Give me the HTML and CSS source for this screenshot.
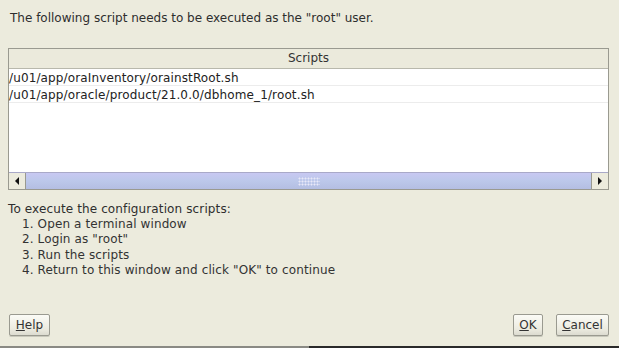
FILE: index.html
```html
<!DOCTYPE html>
<html>
<head>
<meta charset="utf-8">
<link rel="stylesheet" href="styles.css">
</head>
<body>
<div class="dialog">
  <p class="intro">The following script needs to be executed as the "root" user.</p>
  <div class="table">
    <div class="thead">Scripts</div>
    <div class="tbody">
      <div class="row">/u01/app/oraInventory/orainstRoot.sh</div>
      <div class="row">/u01/app/oracle/product/21.0.0/dbhome_1/root.sh</div>
    </div>
    <div class="hscroll">
      <div class="arrow"><svg width="6" height="8" viewBox="0 0 6 8"><path d="M5 0 L1 4 L5 8 Z" fill="#111"/></svg></div>
      <div class="track"><div class="grip"></div></div>
      <div class="arrow"><svg width="6" height="8" viewBox="0 0 6 8"><path d="M1 0 L5 4 L1 8 Z" fill="#111"/></svg></div>
    </div>
  </div>
  <div class="instructions">
    <p class="lead">To execute the configuration scripts:</p>
    <ol class="steps">
      <li>1. Open a terminal window</li>
      <li>2. Login as "root"</li>
      <li>3. Run the scripts</li>
      <li>4. Return to this window and click "OK" to continue</li>
    </ol>
  </div>
  <div class="buttons">
    <button class="btn help"><u>H</u>elp</button>
    <div class="right">
      <button class="btn ok"><u>O</u>K</button>
      <button class="btn cancel"><u>C</u>ancel</button>
    </div>
  </div>
</div>
<div class="bottombar"></div>
</body>
</html>
```
FILE: styles.css
```css
html, body {
  margin: 0;
  padding: 0;
  background: #ecebdd;
  width: 619px;
  height: 348px;
  overflow: hidden;
}
body {
  font-family: "DejaVu Sans", sans-serif;
  font-size: 12px;
  color: #2e2e2e;
  position: relative;
}
.dialog {
  display: flex;
  flex-direction: column;
  height: 346px;
  padding: 0 10px 0 8px;
  box-sizing: border-box;
}
.intro {
  margin: 11px 0 0 2px;
  line-height: 14px;
}
.table {
  margin-top: 23px;
  width: 601px;
  border: 1px solid #9a9a90;
  box-sizing: border-box;
  display: flex;
  flex-direction: column;
  height: 142px;
}
.thead {
  height: 19px;
  line-height: 19px;
  text-align: center;
  background: #ebeadc;
  border-bottom: 1px solid #b8b8ac;
  color: #333;
}
.tbody {
  flex: 1;
  background: #fff;
}
.row {
  height: 16px;
  line-height: 18px;
  border-bottom: 1px solid #ececec;
  color: #222;
  letter-spacing: 0.13px;
}
.hscroll {
  display: flex;
  height: 16px;
  border-top: 1px solid #a9a9c8;
}
.arrow {
  width: 16px;
  background: #ecebdd;
  border-right: 1px solid #9a9a90;
  display: flex;
  align-items: center;
  justify-content: center;
}
.arrow:last-child {
  border-right: none;
  border-left: 1px solid #9a9a90;
}
.track {
  flex: 1;
  background: linear-gradient(to bottom, #c8c8f2 0%, #bcc8ea 50%, #b4bee2 100%);
  display: flex;
  align-items: center;
  justify-content: center;
}
.grip {
  width: 22px;
  height: 9px;
  background-image: radial-gradient(circle, #e8e8f8 0.8px, transparent 1.2px);
  background-size: 3px 3px;
}
.instructions {
  margin-top: 12px;
  line-height: 15.2px;
  letter-spacing: 0.12px;
}
.lead {
  margin: 0;
}
.steps {
  list-style: none;
  margin: 0;
  padding: 0 0 0 14px;
  color: #333;
}
.buttons {
  margin-top: auto;
  margin-bottom: 10px;
  display: flex;
  justify-content: space-between;
  align-items: flex-end;
}
.right {
  display: flex;
  gap: 13px;
}
.btn {
  font-family: "DejaVu Sans", sans-serif;
  font-size: 12px;
  color: #333;
  height: 22px;
  padding: 0 6px;
  border: 1px solid #9a9a90;
  border-radius: 2px;
  background: linear-gradient(to bottom, #fbfbf6 0%, #ecebe0 70%, #dcdbd0 100%);
  box-shadow: 0 1px 0 #c8c8bc;
}
.help { margin-left: 1px; width: 41px; padding: 0; }
.ok { width: 30px; padding: 0; }
.cancel { width: 53px; padding: 0; }
.bottombar {
  height: 2px;
  background: linear-gradient(to right, #8a8a84 0%, #8a8a84 50%, #2a2a2a 50%, #2a2a2a 100%);
}
```
